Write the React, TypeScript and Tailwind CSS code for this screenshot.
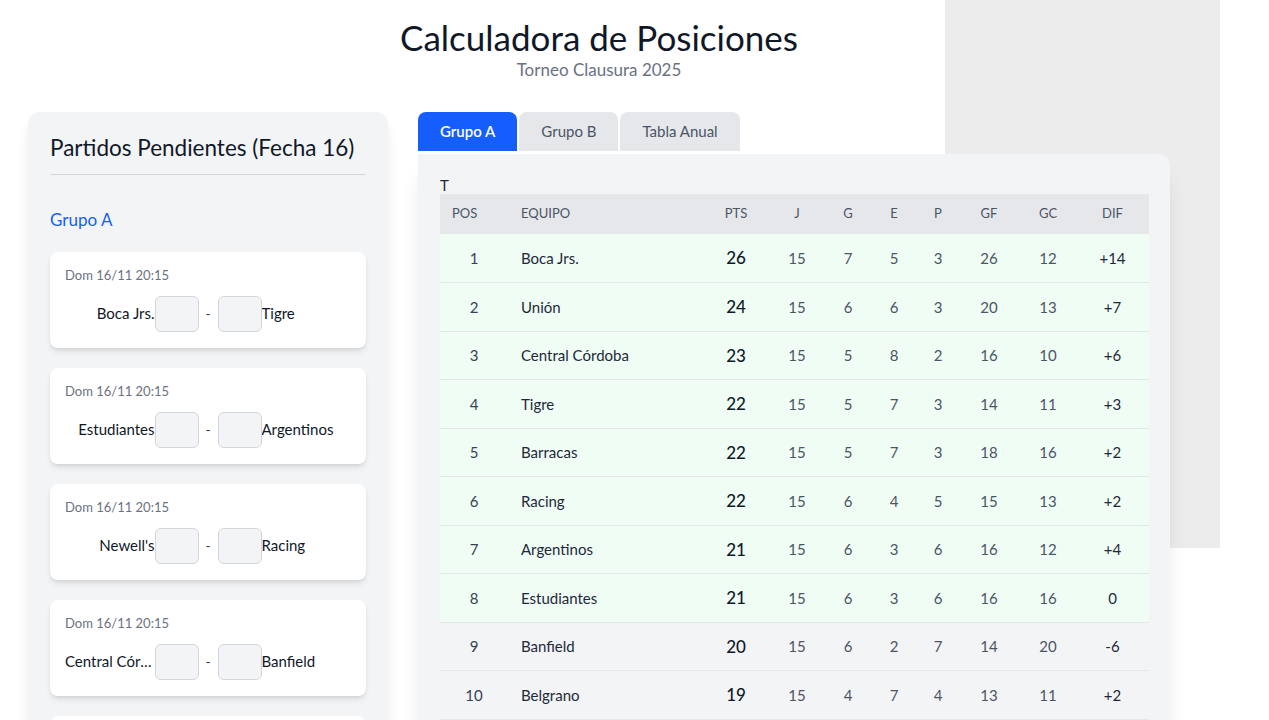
import { useState } from 'react'

type Match = { home: string; away: string; date: string }

type Row = {
  pos: number
  team: string
  pts: number
  j: number
  g: number
  e: number
  p: number
  gf: number
  gc: number
  dif: string
}

const matches: Match[] = [
  { home: 'Boca Jrs.', away: 'Tigre', date: 'Dom 16/11 20:15' },
  { home: 'Estudiantes', away: 'Argentinos', date: 'Dom 16/11 20:15' },
  { home: "Newell's", away: 'Racing', date: 'Dom 16/11 20:15' },
  { home: 'Central Córdoba', away: 'Banfield', date: 'Dom 16/11 20:15' },
  { home: 'Unión', away: 'Barracas', date: 'Dom 16/11 20:15' }
]

const rows: Row[] = [
  { pos: 1, team: 'Boca Jrs.', pts: 26, j: 15, g: 7, e: 5, p: 3, gf: 26, gc: 12, dif: '+14' },
  { pos: 2, team: 'Unión', pts: 24, j: 15, g: 6, e: 6, p: 3, gf: 20, gc: 13, dif: '+7' },
  { pos: 3, team: 'Central Córdoba', pts: 23, j: 15, g: 5, e: 8, p: 2, gf: 16, gc: 10, dif: '+6' },
  { pos: 4, team: 'Tigre', pts: 22, j: 15, g: 5, e: 7, p: 3, gf: 14, gc: 11, dif: '+3' },
  { pos: 5, team: 'Barracas', pts: 22, j: 15, g: 5, e: 7, p: 3, gf: 18, gc: 16, dif: '+2' },
  { pos: 6, team: 'Racing', pts: 22, j: 15, g: 6, e: 4, p: 5, gf: 15, gc: 13, dif: '+2' },
  { pos: 7, team: 'Argentinos', pts: 21, j: 15, g: 6, e: 3, p: 6, gf: 16, gc: 12, dif: '+4' },
  { pos: 8, team: 'Estudiantes', pts: 21, j: 15, g: 6, e: 3, p: 6, gf: 16, gc: 16, dif: '0' },
  { pos: 9, team: 'Banfield', pts: 20, j: 15, g: 6, e: 2, p: 7, gf: 14, gc: 20, dif: '-6' },
  { pos: 10, team: 'Belgrano', pts: 19, j: 15, g: 4, e: 7, p: 4, gf: 13, gc: 11, dif: '+2' },
  { pos: 11, team: "Newell's", pts: 17, j: 15, g: 4, e: 5, p: 6, gf: 12, gc: 17, dif: '-5' }
]

const tabs = ['Grupo A', 'Grupo B', 'Tabla Anual']

const MatchCard = ({ m }: { m: Match }) => (
  <div className="bg-white rounded-lg shadow-md px-[15px] pt-[15px] pb-4 h-[96px]">
    <div className="text-[13px] leading-4 text-gray-500">{m.date}</div>
    <div className="flex items-center mt-[13px]">
      <span className="flex-1 min-w-0 truncate text-right text-[15px] text-gray-900">{m.home}</span>
      <input className="w-11 h-9 bg-gray-100 border border-gray-300 rounded-md" />
      <span className="w-[19px] text-center text-gray-700 text-sm">-</span>
      <input className="w-11 h-9 bg-gray-100 border border-gray-300 rounded-md" />
      <span className="flex-1 min-w-0 truncate text-left text-[15px] text-gray-900">{m.away}</span>
    </div>
  </div>
)

const App = () => {
  const [tab, setTab] = useState(0)

  return (
    <div className="relative min-h-screen bg-white overflow-hidden font-['Lato','Noto_Sans',sans-serif]">
      <div className="absolute left-[945px] top-0 w-[275px] h-[548px] bg-[#ececec]" />
      <div className="relative w-[1142px] ml-[28px]">
        <header className="text-center pt-[14px]">
          <h1 className="text-[35px] leading-[46px] text-gray-900">Calculadora de Posiciones</h1>
          <p className="text-[17px] leading-5 text-gray-500">Torneo Clausura 2025</p>
        </header>

        <div className="flex gap-[30px] mt-[32px] items-start">
          <aside className="w-[360px] bg-gray-100 rounded-xl shadow-lg px-[22px] pt-[20px] pb-6">
            <h2 className="text-[22.5px] leading-8 text-gray-900 pb-[10px] border-b border-gray-300">
              Partidos Pendientes (Fecha 16)
            </h2>
            <h3 className="text-[17px] text-blue-600 mt-[32px] mb-[19px]">Grupo A</h3>
            <div className="flex flex-col gap-5">
              {matches.map((m, i) => (
                <MatchCard key={i} m={m} />
              ))}
            </div>
          </aside>

          <section className="w-[752px]">
            <div className="flex gap-[2px]">
              {tabs.map((t, i) => (
                <button
                  key={t}
                  onClick={() => setTab(i)}
                  className={
                    i === tab
                      ? 'h-[39px] px-[22px] rounded-t-lg bg-blue-600 text-white font-semibold text-[15px]'
                      : 'h-[39px] px-[22px] rounded-t-lg bg-gray-200 text-gray-600 text-[15px]'
                  }
                >
                  {t}
                </button>
              ))}
            </div>
            <div className="mt-[3px] bg-gray-100 rounded-tr-xl shadow-xl px-[22px] pt-[22px] pb-6">
              <div className="text-[15px] leading-[18px] text-gray-800">T</div>
              <table className="w-[709px] table-fixed border-collapse">
                <colgroup>
                  <col className="w-[68px]" />
                  <col className="w-[196px]" />
                  <col className="w-[64px]" />
                  <col className="w-[58px]" />
                  <col className="w-[44px]" />
                  <col className="w-[48px]" />
                  <col className="w-[40px]" />
                  <col className="w-[62px]" />
                  <col className="w-[56px]" />
                  <col className="w-[73px]" />
                </colgroup>
                <thead>
                  <tr className="bg-gray-200 h-10 text-[13px] text-gray-600 font-normal">
                    <th className="text-left pl-3 font-normal">POS</th>
                    <th className="text-left pl-[13px] font-normal">EQUIPO</th>
                    <th className="font-normal">PTS</th>
                    <th className="font-normal">J</th>
                    <th className="font-normal">G</th>
                    <th className="font-normal">E</th>
                    <th className="font-normal">P</th>
                    <th className="font-normal">GF</th>
                    <th className="font-normal">GC</th>
                    <th className="font-normal">DIF</th>
                  </tr>
                </thead>
                <tbody>
                  {rows.map((r) => (
                    <tr
                      key={r.pos}
                      className={
                        r.pos <= 8
                          ? 'h-[48.5px] bg-[#f0fdf4] border-b border-gray-200 text-[15px] text-gray-600'
                          : 'h-[48.5px] border-b border-gray-200 text-[15px] text-gray-600'
                      }
                    >
                      <td className="text-center text-gray-700">{r.pos}</td>
                      <td className="pl-[13px] text-gray-800">{r.team}</td>
                      <td className="text-center text-[17px] font-medium text-gray-900">{r.pts}</td>
                      <td className="text-center">{r.j}</td>
                      <td className="text-center">{r.g}</td>
                      <td className="text-center">{r.e}</td>
                      <td className="text-center">{r.p}</td>
                      <td className="text-center">{r.gf}</td>
                      <td className="text-center">{r.gc}</td>
                      <td className="text-center text-gray-800">{r.dif}</td>
                    </tr>
                  ))}
                </tbody>
              </table>
            </div>
          </section>
        </div>
      </div>
    </div>
  )
}

export default App
